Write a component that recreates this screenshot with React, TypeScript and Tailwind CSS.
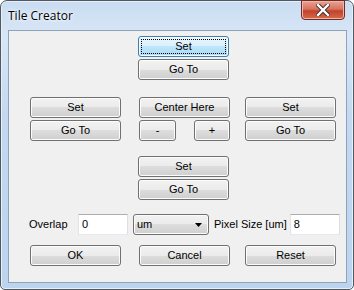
import React from "react"

const btn =
  "h-[21px] rounded-[3px] border border-[#707070] bg-[linear-gradient(#f2f2f2_0%,#ebebeb_50%,#dddddd_50%,#cfcfcf_100%)] text-[11px] text-black flex items-center justify-center shadow-[inset_0_0_0_1px_#fcfcfc]"

const Btn = ({ label, w = "w-[91px]", focus = false }: { label: string; w?: string; focus?: boolean }) => {
  if (focus) {
    return (
      <div className="h-[21px] w-[91px] rounded-[3px] border border-[#3c7fb1] bg-[linear-gradient(#eaf6fd_0%,#d9f0fc_50%,#bee6fd_50%,#a7d9f5_100%)] p-[2px] shadow-[inset_0_0_0_1px_#f4fbfe]">
        <div className="h-full w-full border border-dotted border-black flex items-center justify-center text-[11px] text-black">
          {label}
        </div>
      </div>
    )
  }
  return <div className={`${btn} ${w}`}>{label}</div>
}

const Input = ({ value, w }: { value: string; w: string }) => (
  <div className={`h-[21px] ${w} bg-white border border-[#abadb3] border-b-[#e3e9ef] border-r-[#dbdfe6] border-l-[#e2e3ea] flex items-center pl-[3px] text-[11px]`}>
    {value}
  </div>
)

export default function App() {
  return (
    <div
      className="w-[354px] h-[290px] bg-white"
      style={{ fontFamily: '"Liberation Sans", Arial, sans-serif' }}
    >
      <div className="relative w-[354px] h-[290px] rounded-t-[7px] rounded-b-[5px] border border-[#52585f] bg-[linear-gradient(180deg,#c9dcf1_0%,#d8e7f7_12%,#c3d9f0_40%,#bcd4ee_100%)] shadow-[inset_0_0_0_1px_#e6f0fa]">
        <div className="flex items-start h-[29px]">
          <div
            className="pl-[7px] pt-[6px] text-[12px] text-black [text-shadow:0_0_6px_#ffffff,0_0_3px_#ffffff]"
            style={{ fontFamily: '"Open Sans", "Noto Sans", sans-serif' }}
          >
            Tile Creator
          </div>
          <div className="ml-auto mr-[8px] mt-[-1px] h-[20px] w-[44px] rounded-b-[4px] border border-[#6f2a25] bg-[linear-gradient(#e8a394_0%,#d7735e_45%,#c4412b_55%,#d56a4c_100%)] flex items-center justify-center shadow-[inset_0_0_0_1px_#f0b7a8]">
            <svg width="14" height="12" viewBox="0 0 14 12">
              <path d="M2 1 L12 11 M12 1 L2 11" stroke="#3a2a2a" strokeWidth="4.2" strokeLinecap="square" />
              <path d="M2 1 L12 11 M12 1 L2 11" stroke="#ffffff" strokeWidth="2.4" strokeLinecap="square" />
            </svg>
          </div>
        </div>

        <div className="ml-[7px] w-[339px] h-[253px] border border-[#8da2bb] bg-[#f0f0f0] text-[11px] text-black">
          <div className="flex flex-col gap-[2px] pl-[129px] pt-[5px]">
            <Btn label="Set" focus />
            <Btn label="Go To" />
          </div>

          <div className="flex pt-[17px] pl-[21px]">
            <div className="flex flex-col gap-[2px]">
              <Btn label="Set" />
              <Btn label="Go To" />
            </div>
            <div className="flex flex-col gap-[2px] ml-[18px]">
              <Btn label="Center Here" />
              <div className="flex justify-between w-[91px]">
                <Btn label="-" w="w-[37px]" />
                <Btn label="+" w="w-[36px]" />
              </div>
            </div>
            <div className="flex flex-col gap-[2px] ml-[15px]">
              <Btn label="Set" />
              <Btn label="Go To" />
            </div>
          </div>

          <div className="flex flex-col gap-[2px] pl-[129px] pt-[15px]">
            <Btn label="Set" />
            <Btn label="Go To" />
          </div>

          <div className="flex items-center pt-[14px] pl-[20px]">
            <span className="w-[49px]">Overlap</span>
            <Input value="0" w="w-[50px]" />
            <div className="ml-[5px] h-[21px] w-[76px] rounded-[3px] border border-[#707070] bg-[linear-gradient(#f2f2f2_0%,#ebebeb_50%,#dddddd_50%,#cfcfcf_100%)] flex items-center pl-[3px] pr-[6px] shadow-[inset_0_0_0_1px_#fcfcfc]">
              <span>um</span>
              <svg className="ml-auto" width="7" height="4" viewBox="0 0 7 4">
                <path d="M0 0 H7 L3.5 4 Z" fill="#000" />
              </svg>
            </div>
            <span className="ml-[5px]">Pixel Size [um]</span>
            <div className="ml-[3px]">
              <Input value="8" w="w-[50px]" />
            </div>
          </div>

          <div className="flex pt-[10px] pl-[21px]">
            <Btn label="OK" />
            <div className="ml-[18px]">
              <Btn label="Cancel" />
            </div>
            <div className="ml-[15px]">
              <Btn label="Reset" />
            </div>
          </div>
        </div>
      </div>
    </div>
  )
}
